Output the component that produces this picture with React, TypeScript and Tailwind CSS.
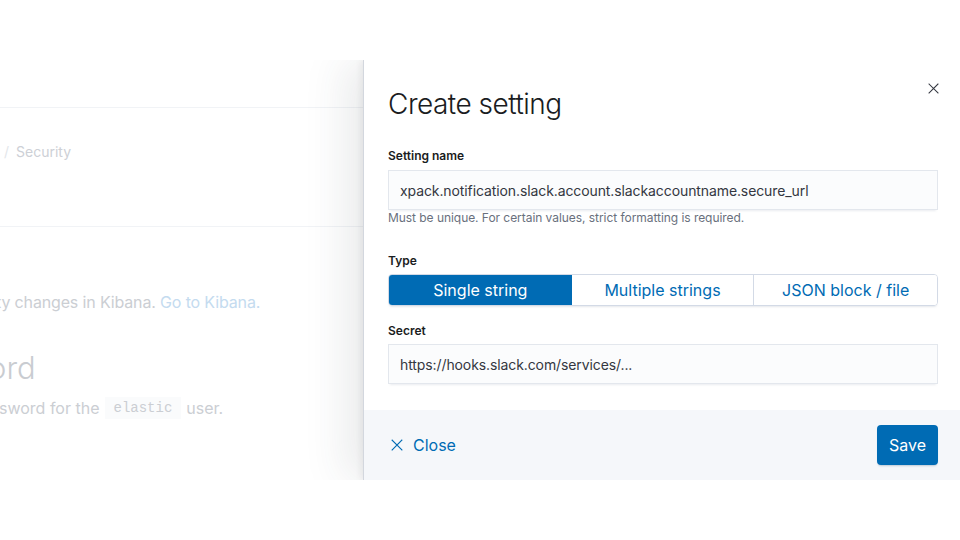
export default function App() {
  return (
    <div className="w-[960px] h-[540px] bg-white overflow-hidden font-['Inter',sans-serif]">
      <div className="mt-[60px] h-[420px] flex overflow-hidden relative">
        <BackgroundPage />
        <Flyout />
      </div>
    </div>
  );
}

function BackgroundPage() {
  return (
    <div className="w-[363px] shrink-0 overflow-hidden">
      <div className="h-[48px] border-b border-[#f1f3f6]" />
      <div className="h-[119px] border-b border-[#f1f3f6] pt-[34px]">
        <div className="flex items-center text-[14px] leading-[20px] text-[#cdd0d6] whitespace-nowrap">
          <span className="ml-[4px] text-[#e3e6ea]">/</span>
          <span className="ml-[7px]">Security</span>
        </div>
      </div>
      <div className="pt-[63px] whitespace-nowrap">
        <p className="-ml-[4px] text-[16px] leading-[24px] tracking-[-0.15px] text-[#cbced3]">
          ty changes in Kibana. <span className="text-[#c4dbef]">Go to Kibana.</span>
        </p>
        <h2 className="mt-[36px] -ml-[12px] text-[31px] leading-[36px] font-light text-[#c9ccd1]">ord</h2>
        <p className="mt-[10px] -ml-[1px] text-[16px] leading-[24px] text-[#cbced3] flex items-center">
          <span>sword for the</span>
          <code className="ml-[5px] mr-[5px] px-[9px] h-[22px] flex items-center bg-[#fafbfc] text-[#cbced3] text-[14px] font-['Liberation_Mono',monospace]">
            elastic
          </code>
          <span>user.</span>
        </p>
      </div>
    </div>
  );
}

function CrossIcon({ className }: { className?: string }) {
  return (
    <svg viewBox="0 0 16 16" className={className} fill="none" stroke="currentColor" strokeWidth="1.5" strokeLinecap="square">
      <path d="M1.5 1.5 L14.5 14.5 M14.5 1.5 L1.5 14.5" />
    </svg>
  );
}

function Flyout() {
  return (
    <div className="relative flex-1 flex flex-col bg-white border-l border-[#d3d7de] shadow-[-3px_0_6px_rgba(0,0,0,0.05),-18px_0_40px_rgba(52,55,65,0.10)]">
      <button className="absolute top-[23px] right-[21px] w-[11px] h-[11px] text-[#343741]">
        <CrossIcon className="w-[11px] h-[11px]" />
      </button>

      <div className="flex-1 pl-[24px] pr-[22px] pt-[26px]">
        <h1 className="text-[28px] leading-[36px] font-light text-[#1a1c21] tracking-[-0.5px]">Create setting</h1>

        <label className="block mt-[26px] text-[12px] leading-[16px] font-semibold text-[#1a1c21]">Setting name</label>
        <div className="mt-[6px] h-[40px] flex items-center px-[11px] bg-[#fbfcfd] border border-[#e3e7ed] shadow-[0_3px_2px_-2px_rgba(152,162,179,0.2)] text-[14px] tracking-[-0.1px] text-[#343741]">
          xpack.notification.slack.account.slackaccountname.secure_url
        </div>
        <p className="text-[12px] leading-[16px] tracking-[-0.05px] text-[#69707d]">Must be unique. For certain values, strict formatting is required.</p>

        <label className="block mt-[27px] text-[12px] leading-[16px] font-semibold text-[#1a1c21]">Type</label>
        <div className="mt-[5px] h-[32px] grid grid-cols-3 rounded-[4px] border border-[#d3dae6] overflow-hidden shadow-[0_2px_2px_-1px_rgba(152,162,179,0.25)] text-[16px]">
          <div className="flex items-center justify-center bg-[#006bb4] text-white">Single string</div>
          <div className="flex items-center justify-center bg-white text-[#006bb4] border-r border-[#d3dae6]">Multiple strings</div>
          <div className="flex items-center justify-center bg-white text-[#006bb4]">JSON block / file</div>
        </div>

        <label className="block mt-[17px] text-[12px] leading-[16px] font-semibold text-[#1a1c21]">Secret</label>
        <div className="mt-[5px] h-[40px] flex items-center px-[11px] bg-[#fbfcfd] border border-[#e3e7ed] shadow-[0_3px_2px_-2px_rgba(152,162,179,0.2)] text-[14px] tracking-[-0.1px] text-[#343741]">
          https://hooks.slack.com/services/...
        </div>
      </div>

      <div className="h-[70px] shrink-0 bg-[#f5f7fa] flex items-center justify-between pl-[27px] pr-[22px]">
        <button className="flex items-center gap-[10px] text-[16px] text-[#006bb4]">
          <CrossIcon className="w-[12px] h-[12px]" />
          <span>Close</span>
        </button>
        <button className="w-[61px] h-[40px] rounded-[4px] bg-[#006bb4] text-white text-[16px] shadow-[0_2px_2px_-1px_rgba(54,97,126,0.3)]">
          Save
        </button>
      </div>
    </div>
  );
}
